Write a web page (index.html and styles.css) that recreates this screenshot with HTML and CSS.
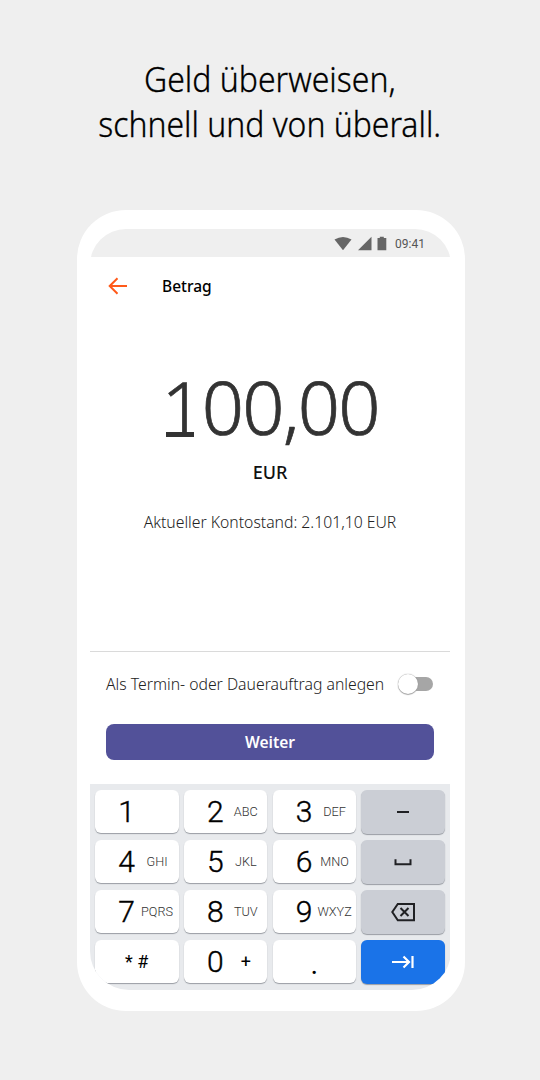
FILE: index.html
```html
<!DOCTYPE html>
<html lang="de">
<head>
<meta charset="utf-8">
<title>Geld überweisen</title>
<link rel="stylesheet" href="styles.css">
</head>
<body>
<h1 class="headline"><span class="line line-one">Geld überweisen,</span><span class="line line-two">schnell und von überall.</span></h1>
<main class="phone">
  <div class="screen">
    <div class="status">
      <svg class="status-icons" width="54" height="16" viewBox="0 0 54 16"><path d="M.5 3.500Q9-1.700 17.500 3.500L9 14.300Z"/><path d="M24 14.300H37.500V.8Z"/><path d="M43.500 2h2.300V.7h4V2h2.500v12.300H43.500Z"/></svg>
      <span class="clock">09:41</span>
    </div>
    <header class="bar">
      <svg class="back" width="20" height="18" viewBox="0 0 20 18"><path d="M19 9H2M9.500 1.200L1.700 9l7.800 7.800"/></svg>
      <span class="title">Betrag</span>
    </header>
    <section class="amount-area">
      <div class="amount"><span class="one">1</span>00,00</div>
      <div class="currency">EUR</div>
      <div class="balance">Aktueller Kontostand: 2.101,10 EUR</div>
    </section>
    <section class="actions">
      <div class="option"><span class="option-text">Als Termin- oder Dauerauftrag anlegen</span><span class="switch"><span class="knob"></span></span></div>
      <button class="submit">Weiter</button>
    </section>
    <div class="keyboard">
      <div class="key"><span class="digit">1</span></div>
      <div class="key"><span class="digit">2</span><span class="letters">ABC</span></div>
      <div class="key"><span class="digit">3</span><span class="letters">DEF</span></div>
      <div class="key side"><svg width="28" height="24" viewBox="0 0 28 24"><path d="M8 12h12"/></svg></div>
      <div class="key"><span class="digit">4</span><span class="letters">GHI</span></div>
      <div class="key"><span class="digit">5</span><span class="letters">JKL</span></div>
      <div class="key"><span class="digit">6</span><span class="letters">MNO</span></div>
      <div class="key side"><svg width="28" height="24" viewBox="0 0 28 24"><path d="M6.500 9.300v5h15v-5"/></svg></div>
      <div class="key"><span class="digit">7</span><span class="letters">PQRS</span></div>
      <div class="key"><span class="digit">8</span><span class="letters">TUV</span></div>
      <div class="key"><span class="digit">9</span><span class="letters">WXYZ</span></div>
      <div class="key side"><svg width="28" height="24" viewBox="0 0 28 24"><path d="M8.800 4H25V20.200H8.800L3.300 12ZM11.500 8l8 8m0-8l-8 8"/></svg></div>
      <div class="key symbols">* #</div>
      <div class="key"><span class="digit">0</span><span class="letters plus">+</span></div>
      <div class="key dot">.</div>
      <div class="key side enter"><svg width="28" height="24" viewBox="0 0 28 24"><path d="M3 12H20M14.500 6.500l5.500 5.500-5.500 5.500M23.500 6v12"/></svg></div>
    </div>
  </div>
</main>
</body>
</html>
```
FILE: styles.css
```css
* { box-sizing: border-box; }
body {
  margin: 0;
  height: 1080px;
  overflow: hidden;
  padding-top: 56px;
  background: #efefef;
  color: #000;
  font-family: "Noto Sans", sans-serif;
}
.headline {
  margin: 0;
  height: 154px;
  display: flex;
  flex-direction: column;
  align-items: center;
  font-weight: 300;
  font-size: 34px;
  line-height: 45px;
  white-space: nowrap;
  -webkit-text-stroke: .3px #000;
}
.line-one { transform: translateY(1px) scaleX(.94); }
.line-two { transform: translateY(1px) scaleX(.938); }
.phone {
  width: 388px;
  height: 801px;
  margin-left: 77px;
  padding: 19px 14px 21px 13px;
  border-radius: 49px;
  background: #fff;
}
.screen {
  width: 361px;
  height: 761px;
  padding-right: 1px;
  display: flex;
  flex-direction: column;
  overflow: hidden;
  border-radius: 36px 36px 39px 39px;
}
.status {
  height: 28px;
  margin-right: -1px;
  padding: 1px 26px 0 0;
  display: flex;
  align-items: center;
  justify-content: flex-end;
  gap: 7px;
  background: #efefef;
}
.status-icons { fill: #666; }
.clock { font: 12px/16px Roboto, sans-serif; color: #555; }
.bar {
  height: 56px;
  padding: 1px 0 0 18px;
  display: flex;
  align-items: center;
  gap: 34px;
}
.back { fill: none; stroke: #ff5a1a; stroke-width: 2; }
.title { font-size: 15.500px; font-weight: 500; }
.amount-area {
  height: 338px;
  padding-top: 44px;
  text-align: center;
  white-space: nowrap;
}
.amount {
  font-size: 74px;
  line-height: 100px;
  font-weight: 300;
  color: #333;
  letter-spacing: -1.800px;
  -webkit-text-stroke: .7px #333;
}
.one {
  background: linear-gradient(#333, #333) 5px 76px / 28px 5px no-repeat;
}
.currency { margin-top: 2px; font-size: 18px; line-height: 26px; font-weight: 500; color: #111; }
.balance { margin-top: 26px; font-size: 15.750px; line-height: 22px; font-weight: 300; color: #222; }
.actions {
  height: 133px;
  padding: 16px 16px 0;
  border-top: 1px solid #dadada;
}
.option {
  height: 32px;
  display: flex;
  align-items: center;
  justify-content: space-between;
  white-space: nowrap;
}
.option-text { font-size: 15.750px; font-weight: 300; color: #222; }
.switch {
  width: 31px;
  height: 14px;
  flex: none;
  display: flex;
  align-items: center;
  border-radius: 7px;
  background: #a6a6a6;
  margin-right: 1px;
}
.knob {
  width: 20px;
  height: 20px;
  flex: none;
  margin-left: -4px;
  border-radius: 50%;
  background: #fff;
  box-shadow: 0 0 1px #777, 0 1px 1px #aaa;
}
.submit {
  width: 328px;
  height: 36px;
  margin-top: 24px;
  padding: 0;
  border: 0;
  border-radius: 8px;
  background: #525199;
  color: #fff;
  font: 600 15.500px/36px "Noto Sans", sans-serif;
}
.keyboard {
  flex: 1;
  padding: 6px 5px 0;
  display: grid;
  grid-template-columns: repeat(4, 83.500px);
  grid-auto-rows: 43px;
  gap: 7px 5.300px;
  align-content: start;
  background: #e8eaed;
}
.key {
  display: flex;
  align-items: center;
  border-radius: 6px;
  background: #fff;
  box-shadow: 0 1px 1px #999da3;
  font-family: Roboto, sans-serif;
}
.digit {
  width: 17px;
  margin-left: 23px;
  flex: none;
  text-align: center;
  font-size: 30px;
  line-height: 43px;
  font-weight: 300;
  -webkit-text-stroke: .4px #000;
}
.letters {
  width: 40px;
  margin-left: 2px;
  text-align: center;
  font-size: 12.700px;
  font-weight: 300;
  color: #333;
}
.plus { font-size: 18px; font-weight: 400; color: #000; }
.symbols, .dot { justify-content: center; font-size: 18px; }
.dot { font-size: 29px; padding-top: 5px; }
.side { height: 44px; justify-content: center; background: #cbced5; }
.side svg { fill: none; stroke: #202124; stroke-width: 2; }
.enter { background: #1a73e8; }
.enter svg { stroke: #fff; stroke-width: 2.200; }
```
